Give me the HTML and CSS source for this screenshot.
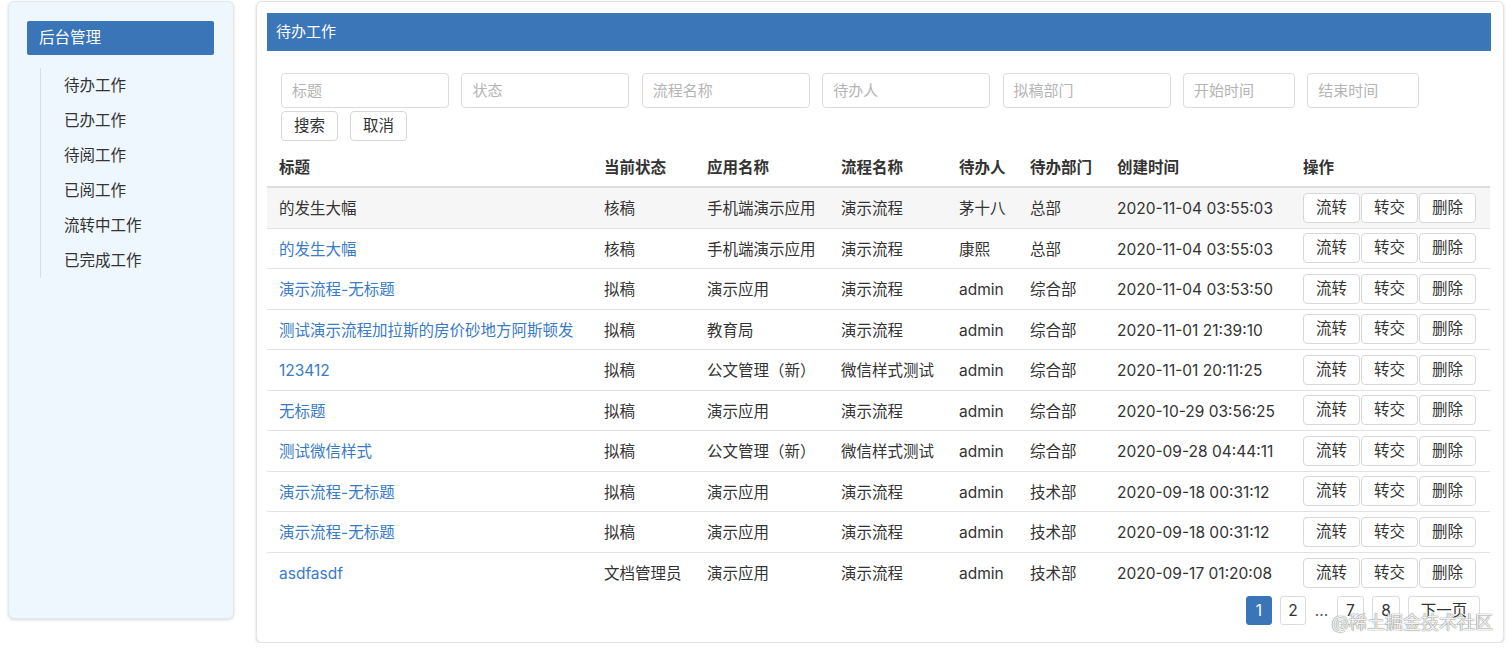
FILE: index.html
```html
<!DOCTYPE html>
<html lang="zh-CN">
<head>
<meta charset="utf-8">
<title>待办工作</title>
<link rel="stylesheet" href="styles.css">
</head>
<body>
<div class="page">
  <aside class="sidebar">
    <div class="side-title">后台管理</div>
    <ul class="side-menu">
      <li>待办工作</li>
      <li>已办工作</li>
      <li>待阅工作</li>
      <li>已阅工作</li>
      <li>流转中工作</li>
      <li>已完成工作</li>
    </ul>
  </aside>
  <main class="main">
    <div class="main-title">待办工作</div>
    <div class="search">
      <div class="search-row">
        <input class="field" placeholder="标题">
        <input class="field" placeholder="状态">
        <input class="field" placeholder="流程名称">
        <input class="field" placeholder="待办人">
        <input class="field" placeholder="拟稿部门">
        <input class="field field-sm" placeholder="开始时间">
        <input class="field field-sm" placeholder="结束时间">
      </div>
      <div class="search-btns">
        <button class="btn">搜索</button>
        <button class="btn">取消</button>
      </div>
    </div>
    <table class="grid">
      <colgroup>
        <col class="c1"><col class="c2"><col class="c3"><col class="c4"><col class="c5"><col class="c6"><col class="c7"><col class="c8">
      </colgroup>
      <thead>
        <tr><th>标题</th><th>当前状态</th><th>应用名称</th><th>流程名称</th><th>待办人</th><th>待办部门</th><th>创建时间</th><th>操作</th></tr>
      </thead>
      <tbody>
        <tr class="hover"><td>的发生大幅</td><td>核稿</td><td>手机端演示应用</td><td>演示流程</td><td>茅十八</td><td>总部</td><td>2020-11-04 03:55:03</td><td class="ops"><button class="btn">流转</button><button class="btn">转交</button><button class="btn">删除</button></td></tr>
        <tr><td><a class="link">的发生大幅</a></td><td>核稿</td><td>手机端演示应用</td><td>演示流程</td><td>康熙</td><td>总部</td><td>2020-11-04 03:55:03</td><td class="ops"><button class="btn">流转</button><button class="btn">转交</button><button class="btn">删除</button></td></tr>
        <tr><td><a class="link">演示流程-无标题</a></td><td>拟稿</td><td>演示应用</td><td>演示流程</td><td>admin</td><td>综合部</td><td>2020-11-04 03:53:50</td><td class="ops"><button class="btn">流转</button><button class="btn">转交</button><button class="btn">删除</button></td></tr>
        <tr><td><a class="link">测试演示流程加拉斯的房价砂地方阿斯顿发</a></td><td>拟稿</td><td>教育局</td><td>演示流程</td><td>admin</td><td>综合部</td><td>2020-11-01 21:39:10</td><td class="ops"><button class="btn">流转</button><button class="btn">转交</button><button class="btn">删除</button></td></tr>
        <tr><td><a class="link">123412</a></td><td>拟稿</td><td>公文管理（新）</td><td>微信样式测试</td><td>admin</td><td>综合部</td><td>2020-11-01 20:11:25</td><td class="ops"><button class="btn">流转</button><button class="btn">转交</button><button class="btn">删除</button></td></tr>
        <tr><td><a class="link">无标题</a></td><td>拟稿</td><td>演示应用</td><td>演示流程</td><td>admin</td><td>综合部</td><td>2020-10-29 03:56:25</td><td class="ops"><button class="btn">流转</button><button class="btn">转交</button><button class="btn">删除</button></td></tr>
        <tr><td><a class="link">测试微信样式</a></td><td>拟稿</td><td>公文管理（新）</td><td>微信样式测试</td><td>admin</td><td>综合部</td><td>2020-09-28 04:44:11</td><td class="ops"><button class="btn">流转</button><button class="btn">转交</button><button class="btn">删除</button></td></tr>
        <tr><td><a class="link">演示流程-无标题</a></td><td>拟稿</td><td>演示应用</td><td>演示流程</td><td>admin</td><td>技术部</td><td>2020-09-18 00:31:12</td><td class="ops"><button class="btn">流转</button><button class="btn">转交</button><button class="btn">删除</button></td></tr>
        <tr><td><a class="link">演示流程-无标题</a></td><td>拟稿</td><td>演示应用</td><td>演示流程</td><td>admin</td><td>技术部</td><td>2020-09-18 00:31:12</td><td class="ops"><button class="btn">流转</button><button class="btn">转交</button><button class="btn">删除</button></td></tr>
        <tr><td><a class="link">asdfasdf</a></td><td>文档管理员</td><td>演示应用</td><td>演示流程</td><td>admin</td><td>技术部</td><td>2020-09-17 01:20:08</td><td class="ops"><button class="btn">流转</button><button class="btn">转交</button><button class="btn">删除</button></td></tr>
      </tbody>
    </table>
    <nav class="pager">
      <span class="pg">1</span>
      <span class="pg">2</span>
      <span class="dots">...</span>
      <span class="pg">7</span>
      <span class="pg">8</span>
      <span class="pg pg-next">下一页</span>
    </nav>
    <div class="watermark">@稀土掘金技术社区</div>
  </main>
</div>
</body>
</html>
```
FILE: styles.css
```css
* { box-sizing: border-box; }
html, body { margin: 0; padding: 0; background: #fff; }
body {
  font-family: "Inter", "Noto Sans CJK SC", sans-serif;
  font-size: 15.5px;
  color: #333;
}
.page {
  display: flex;
  align-items: flex-start;
  padding: 1px 8px 0 8px;
  gap: 22px;
}
.sidebar {
  width: 226px;
  height: 618px;
  flex: none;
  background: #eef6fe;
  border: 1px solid #e2e8ee;
  border-radius: 6px;
  box-shadow: 0 1px 3px rgba(0,0,0,0.15);
  padding: 19px 19px 0 18px;
}
.side-title {
  height: 34px;
  line-height: 34px;
  background: #3a75b8;
  color: #fff;
  padding-left: 12px;
  border-radius: 2px;
  font-size: 15.5px;
}
.side-menu {
  list-style: none;
  margin: 13px 0 0 13px;
  padding: 0 0 0 23px;
  border-left: 1px solid #d8dee4;
}
.side-menu li {
  height: 35px;
  line-height: 35px;
  color: #333;
}
.main {
  position: relative;
  width: 1248px;
  height: 642px;
  flex: none;
  background: #fff;
  border: 1px solid #e3e3e3;
  border-radius: 6px;
  box-shadow: 0 1px 3px rgba(0,0,0,0.15);
  padding: 11px 12px 0 10px;
}
.main-title {
  height: 38px;
  line-height: 38px;
  background: #3b76b9;
  color: #fff;
  padding-left: 9px;
  font-size: 15px;
}
.search { padding: 22px 0 0 14px; }
.search-row { display: flex; gap: 12.4px; }
.field {
  width: 168px;
  height: 35px;
  border: 1px solid #dcdcdc;
  border-radius: 4px;
  padding: 0 10px;
  font: inherit;
  font-size: 15px;
  color: #333;
  outline: none;
}
.field::placeholder { color: #b4b4b4; }
.field-sm { width: 112px; }
.search-btns { display: flex; gap: 12px; margin-top: 3px; }
.btn {
  height: 30px;
  padding: 0 11px;
  background: #fff;
  border: 1px solid #d8d8d8;
  border-radius: 4px;
  font: inherit;
  font-size: 15.5px;
  color: #333;
  line-height: 28px;
}
.search-btns .btn { width: 57px; padding: 0; }
.grid {
  width: 1223px;
  border-collapse: collapse;
  table-layout: fixed;
  margin-top: 2px;
}
.c1 { width: 325px; }
.c2 { width: 103px; }
.c3 { width: 134px; }
.c4 { width: 118px; }
.c5 { width: 71px; }
.c6 { width: 87px; }
.c7 { width: 186px; }
.c8 { width: 199px; }
.grid th {
  text-align: left;
  font-weight: 600;
  padding: 0 12px 7px;
  height: 44px;
  line-height: 22px;
  vertical-align: bottom;
  border-bottom: 2px solid #dddddd;
  white-space: nowrap;
}
.grid td {
  padding: 6.25px 12px 3.25px;
  height: 40.5px;
  line-height: 22px;
  border-top: 1px solid #e2e2e2;
  white-space: nowrap;
  vertical-align: middle;
}
.grid thead + tbody tr:first-child td { border-top: 0; }
.grid tr.hover td { background: #f6f6f6; }
.link { color: #3a7bc8; text-decoration: none; }
.grid td.ops { font-size: 0; line-height: 0; padding: 4.75px 12px; }
.ops .btn { width: 57px; padding: 0; margin-right: 1px; vertical-align: middle; }
.pager {
  display: flex;
  justify-content: flex-end;
  align-items: center;
  gap: 8px;
  padding-right: 11px;
  margin-top: 3px;
}
.pg {
  min-width: 26px;
  height: 29px;
  line-height: 27px;
  text-align: center;
  border: 1px solid #dcdcdc;
  border-radius: 3px;
  padding: 0 7px;
  font-size: 15.5px;
  color: #333;
}
.pager .pg:first-child { background: #3a75b8; border-color: #3a75b8; color: #fff; }
.pager .pg:nth-child(4) { min-width: 27px; }
.pager .pg:nth-child(5) { min-width: 28px; }
.pg-next { width: 72px; padding: 0; }
.dots { color: #555; width: 15px; text-align: center; }
.watermark {
  position: absolute;
  right: 10px;
  bottom: 8px;
  font-size: 18px;
  color: rgba(255,255,255,0.92);
  text-shadow: 0 0 1px #777, 0 0 1px #777;
}
```
